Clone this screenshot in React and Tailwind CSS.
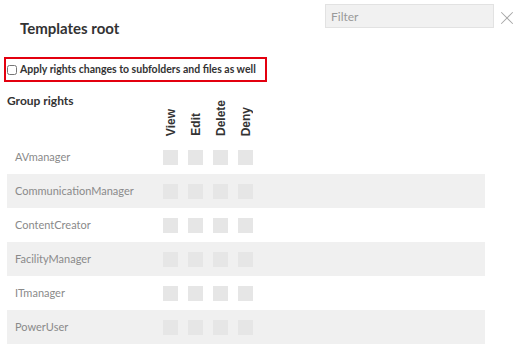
import { X } from "lucide-react";

const groups = [
  "AVmanager",
  "CommunicationManager",
  "ContentCreator",
  "FacilityManager",
  "ITmanager",
  "PowerUser",
];

const rights = ["View", "Edit", "Delete", "Deny"];

export default function App() {
  return (
    <div className="w-[522px] h-[357px] bg-white font-['Lato',sans-serif] text-[#333] overflow-hidden">
      {/* header */}
      <div className="flex items-start h-[57px]">
        <h1 className="pl-5 pt-[18px] text-[15px] font-bold leading-[20px] text-[#333]">Templates root</h1>
        <input
          placeholder="Filter"
          className="ml-auto mt-1 w-[169px] h-[24px] bg-[#f1f1f1] border border-[#e2e2e2] px-[5px] text-[12px] text-[#555] placeholder:text-[#9a9a9a] outline-none"
        />
        <button className="ml-[2px] mr-[4px] mt-[7px] text-[#a8a8a8]">
          <X size={22} strokeWidth={1.1} />
        </button>
      </div>

      {/* apply to subfolders */}
      <div className="ml-1 w-[263px] h-[25px] border-2 border-[#e3000f] flex items-center">
        <input type="checkbox" className="ml-[1px] w-[10px] h-[10px] m-0 accent-gray-500" />
        <span className="ml-[3px] text-[10.5px] font-bold text-[#333] whitespace-nowrap">
          Apply rights changes to subfolders and files as well
        </span>
      </div>

      {/* group rights header */}
      <div className="flex ml-[7px] mt-[11px] h-[46px]">
        <div className="w-[156px] text-[12px] font-bold leading-[15px] text-[#333]">Group rights</div>
        <div className="flex gap-[10px] items-end pb-[3px]">
          {rights.map((r) => (
            <div key={r} className="w-[15px] flex justify-center">
              <span className="[writing-mode:vertical-rl] rotate-180 font-['Liberation_Sans',Arial,sans-serif] font-bold text-[12px] leading-[14px] text-[#333]">
                {r}
              </span>
            </div>
          ))}
        </div>
      </div>

      {/* rows */}
      <div className="ml-[7px] mt-[1px] w-[478px]">
        {groups.map((g, i) => (
          <div key={g} className={`flex items-center h-[34px] ${i % 2 === 1 ? "bg-[#f0f0f0]" : "bg-white"}`}>
            <div className="w-[156px] pl-2 text-[11px] text-[#8a8a8a]">{g}</div>
            <div className="flex gap-[10px]">
              {rights.map((r) => (
                <div key={r} className="w-[15px] h-[15px] bg-[#e6e6e6]" />
              ))}
            </div>
          </div>
        ))}
      </div>
    </div>
  );
}
